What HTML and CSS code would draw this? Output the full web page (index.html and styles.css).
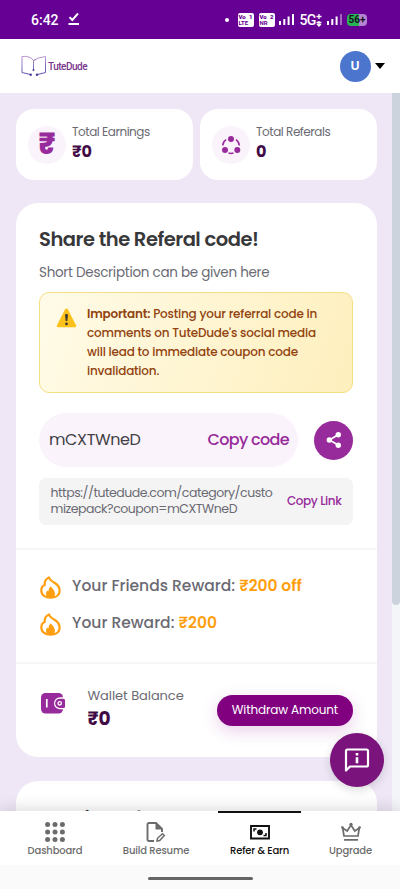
FILE: index.html
```html
<!DOCTYPE html>
<html lang="en">
<head>
<meta charset="utf-8">
<meta name="viewport" content="width=device-width, initial-scale=1">
<title>TuteDude - Refer &amp; Earn</title>
<link rel="stylesheet" href="styles.css">
</head>
<body>
<div class="status">
  <span class="clock">6:42</span>
  <svg class="check" width="12" height="14" viewBox="0 0 12 14" fill="none" stroke="#fff" stroke-width="1.9"><path d="M1.500 5.200 4.300 8 10 1.500M.5 12h10.500"/></svg>
  <span class="dot"></span>
  <span class="volte"><span><b>Vo</b><b>1</b></span><span>LTE</span></span>
  <span class="volte"><span><b>Vo</b><b>2</b></span><span>NR</span></span>
  <svg class="signal" width="16" height="13" viewBox="0 0 16 13" fill="#fff"><path d="M0 8h2v4H0zM4.300 6h2v6h-2zM8.600 3.500h2V12h-2zM13 1h2v11h-2z"/></svg>
  <span class="fiveg">5G</span>
  <svg class="plus" width="6" height="14" viewBox="0 0 6 14" fill="none" stroke="#fff" stroke-width="1.300"><path d="M3 1v5M.5 3.500h5M3 8v5M.5 9.500h5M1 11l2 2 2-2"/></svg>
  <svg class="signal two" width="16" height="13" viewBox="0 0 16 13" fill="#fff"><path d="M0 8h2v4H0zM4.300 6h2v6h-2zM8.600 3.500h2V12h-2z"/><path opacity=".4" d="M13 1h2v11h-2z"/></svg>
  <span class="battery">56<i>+</i></span>
</div>
<header class="top">
  <svg class="book" width="26" height="22" viewBox="0 0 26 22" fill="none" stroke-width=".9">
    <defs><linearGradient id="ink" x1="0" y1="0" x2="0" y2="1"><stop offset="0" stop-color="#b58acb"/><stop offset="1" stop-color="#453fa5"/></linearGradient></defs>
    <path stroke="url(#ink)" d="M9.500 19.500 1 17.500V1.500q8-1 11.500 4Q16 2.500 24.500 1.500v16l-8 2M12.500 5.500V15M12.500 5.500l2.500-1"/>
    <g fill="#493b9b"><circle cx="9.700" cy="19.700" r="1.200"/><circle cx="16" cy="19.700" r="1.200"/><circle cx="12.500" cy="15" r="1"/></g>
  </svg>
  <span class="brand">TuteDude</span>
  <span class="avatar">U</span>
  <span class="caret"></span>
</header>
<div class="viewport">
  <main>
    <section class="stats">
      <article class="stat">
        <span class="bubble rupee">₹</span>
        <div><p>Total Earnings</p><strong>₹0</strong></div>
      </article>
      <article class="stat">
        <span class="bubble"><svg width="20" height="20" viewBox="0 0 20 20" fill="#972b9b"><circle cx="10" cy="4" r="3"/><circle cx="4" cy="15" r="3"/><circle cx="16.300" cy="15" r="3"/><path fill="none" stroke="#972b9b" stroke-width="1.500" d="M1.800 10.500Q2 6.500 5.200 4.700M14.800 4.700Q18 6.500 18.300 10.500M7.500 18q2.500.8 5 0"/></svg></span>
        <div><p class="refs">Total Referals</p><strong>0</strong></div>
      </article>
    </section>
    <section class="card">
      <div class="share">
        <h1>Share the Referal code!</h1>
        <p class="lead">Short Description can be given here</p>
        <div class="notice">
          <svg width="21" height="20" viewBox="0 0 21 20"><path d="M9.200 1.200q1.300-1.400 2.600 0l8.400 16.200q.5 1.700-1.200 1.800H2Q.3 19.100.8 17.400z" fill="#fcc21b"/><path d="M9 6.500q1.500-1.200 3 0l-.7 6.500H9.700z" fill="#3b3530"/><circle cx="10.500" cy="15.900" r="1.400" fill="#3b3530"/></svg>
          <p><b>Important:</b> Posting your referral code in<br>comments on TuteDude's social media<br>will lead to immediate coupon code<br>invalidation.</p>
        </div>
        <div class="coderow">
          <div class="code"><span class="value">mCXTWneD</span><span class="copy">Copy code</span></div>
          <span class="sharebtn"><svg width="16" height="18" viewBox="0 0 16 18" fill="#fff"><path d="M12.500 3.500 3.500 9l9 5.200" fill="none" stroke="#fff" stroke-width="1.700"/><circle cx="12.300" cy="3.800" r="2.700"/><circle cx="3.300" cy="9" r="2.700"/><circle cx="12.300" cy="14.200" r="2.700"/></svg></span>
        </div>
        <div class="link"><p>https://tutedude.com/category/custo<br>mizepack?coupon=mCXTWneD</p><span class="copylink">Copy Link</span></div>
      </div>
      <div class="rewards">
        <div class="reward"><svg width="21" height="23" viewBox="0 0 21 23"><path d="M9 1.400C9.500 4 11.500 5 14.500 6.700c3.500 2 5.100 5 5.100 8 0 4.500-4 7-9.100 7s-9.200-2.700-9.200-7.300c0-2.800 1.400-4.700 3.500-5.400C4.200 5.500 6 3 9 1.400z" fill="none" stroke="#ff9f10" stroke-width="2.200" stroke-linejoin="round"/><path d="M10.500 10.300q4.500 4.200 4.500 7.700 0 3.500-4.500 3.500T6 18q0-2.500 1.300-3.500l1.200 1q0-3 2-5.200z" fill="#ff9f10"/></svg><p class="r1">Your Friends Reward: <b>₹200 off</b></p></div>
        <div class="reward"><svg width="21" height="23" viewBox="0 0 21 23"><path d="M9 1.400C9.500 4 11.500 5 14.500 6.700c3.500 2 5.100 5 5.100 8 0 4.500-4 7-9.100 7s-9.200-2.700-9.200-7.300c0-2.800 1.400-4.700 3.500-5.400C4.200 5.500 6 3 9 1.400z" fill="none" stroke="#ff9f10" stroke-width="2.200" stroke-linejoin="round"/><path d="M10.500 10.300q4.500 4.200 4.500 7.700 0 3.500-4.500 3.500T6 18q0-2.500 1.300-3.500l1.200 1q0-3 2-5.200z" fill="#ff9f10"/></svg><p class="r2">Your Reward: <b>₹200</b></p></div>
      </div>
      <div class="wallet">
        <svg width="24" height="21" viewBox="0 0 24 21"><rect width="22" height="20.500" rx="4.500" fill="#972b9b"/><path d="M5.800 6v8.500" stroke="#fff" stroke-width="1.700"/><path d="M24 4.300h-5a6 6 0 0 0 0 12h5z" fill="#fff"/><path d="M18.800 5.700h3.700q1.500 0 1.500 1.500v6.200q0 1.500-1.500 1.500h-3.700a4.600 4.600 0 0 1 0-9.200z" fill="#972b9b"/><circle cx="18.700" cy="10.300" r="1.700" fill="none" stroke="#fff" stroke-width="1.300"/></svg>
        <div class="balance"><p>Wallet Balance</p><strong>₹0</strong></div>
        <span class="withdraw">Withdraw Amount</span>
      </div>
    </section>
    <section class="card next"><h2>How it works?</h2></section>
  </main>
  <div class="track"><div class="thumb"></div></div>
</div>
<nav>
  <span class="tab"><svg width="20" height="20" viewBox="0 0 20 20" fill="#6c6c6c"><circle cx="2.600" cy="2.600" r="2.500"/><circle cx="10" cy="2.600" r="2.500"/><circle cx="17.400" cy="2.600" r="2.500"/><circle cx="2.600" cy="10" r="2.500"/><circle cx="10" cy="10" r="2.500"/><circle cx="17.400" cy="10" r="2.500"/><circle cx="2.600" cy="17.400" r="2.500"/><circle cx="10" cy="17.400" r="2.500"/><circle cx="17.400" cy="17.400" r="2.500"/></svg><span>Dashboard</span></span>
  <span class="tab"><svg width="20" height="20" viewBox="0 0 20 20" fill="none" stroke="#6c6c6c" stroke-width="1.900"><path d="M8 19H3Q1.500 19 1.500 17.500v-15Q1.500 1 3 1h7l6 6v3"/><path d="M9.500 0v7.500H16.500z" fill="#6c6c6c" stroke="none"/><path d="m11 19 .5-2.700 5-4.500 1.800 1.800-4.600 5z" stroke-width="1.500"/></svg><span>Build Resume</span></span>
  <span class="tab active"><svg width="20" height="20" viewBox="0 0 20 20" fill="none" stroke="#111" stroke-width="1.900"><path d="M1 4h18v12.500H1z"/><circle cx="10" cy="10.300" r="2.900" fill="#111" stroke="none"/><path d="M4 9.500V7h2.500M16 11v2.500h-2.500" stroke-width="1.500"/></svg><span>Refer &amp; Earn</span></span>
  <span class="tab"><svg width="20" height="20" viewBox="0 0 20 20" fill="none" stroke="#6c6c6c" stroke-width="1.700"><path d="M3 14 1.700 6l4.500 3L10 3l3.800 6 4.500-3L17 14zM3 17.800h14"/><g fill="#6c6c6c" stroke="none"><circle cx="10" cy="2.300" r="1.600"/><circle cx="1.500" cy="5.500" r="1.300"/><circle cx="18.500" cy="5.500" r="1.300"/></g></svg><span>Upgrade</span></span>
</nav>
<footer><span></span></footer>
<div class="fab"><svg width="26" height="26" viewBox="0 0 26 26" fill="none" stroke="#fff" stroke-width="2.200" stroke-linejoin="round"><path d="M2 23.500V4Q2 2.500 3.500 2.500h19Q24 2.500 24 4v14q0 1.500-1.500 1.500H6z"/><path d="M13 6v2.500M13 10.200v6" stroke-width="2.600"/></svg></div>
</body>
</html>
```
FILE: styles.css
```css
* { box-sizing: border-box; }
body, p, h1, h2 { margin: 0; }
body {
  width: 400px; height: 889px; overflow: hidden; position: relative;
  display: flex; flex-direction: column;
  font-family: Poppins, Inter, "Noto Sans", sans-serif;
  font-feature-settings: "cv11";
  background: #fff; color: #6a6a73; white-space: nowrap;
}
svg { display: block; flex: none; }
.status { height: 39px; flex: none; background: #660095; color: #fff; display: flex; align-items: center; padding-left: 31px; font-family: Roboto, sans-serif; }
.clock { font-size: 14px; font-weight: 500; width: 37px; }
.check { margin-top: -1px; }
.dot { width: 4px; height: 4px; border-radius: 50%; background: #fff; margin: 0 9px 0 144.500px; }
.volte { width: 16px; height: 14px; margin-right: 5px; padding: 1px 1px 0; border-radius: 2px; background: #fff; color: #660095; font: 700 6px/6px Roboto, sans-serif; display: flex; flex-direction: column; }
.volte span { display: flex; justify-content: space-between; }
.signal { margin-right: 5px; margin-left: -1px; }
.fiveg { font-size: 14px; font-weight: 500; letter-spacing: -.7px; }
.plus { margin: 0 6px 0 0; }
.two { margin-right: 4px; }
.battery { width: 20px; height: 12px; border-radius: 4px; background: linear-gradient(90deg, #28b454 60%, #b785d0 60%); color: #161020; font: 700 10px/12px Roboto, sans-serif; padding-left: 2px; }
.battery i { font-style: normal; }
.top { height: 54px; flex: none; display: flex; align-items: center; padding-left: 21px; background: #fff; }
.brand { font: 500 10px Roboto, sans-serif; letter-spacing: -.5px; color: #79358f; margin-left: 1px; width: 291.500px; }
.avatar { width: 31px; height: 31px; border-radius: 50%; background: #4c75cd; color: #fff; font-size: 13px; font-weight: 600; display: grid; place-items: center; }
.caret { border: 5px solid transparent; border-top: 6px solid #000; border-bottom: 0; margin-left: 4px; }
.viewport { flex: 1; min-height: 0; display: flex; overflow: hidden; background: #efe7f6; }
main { width: 392px; padding: 16px 15px 0 15.500px; }
.stats { display: grid; grid-template-columns: 177.500px 177.500px; gap: 6.500px; height: 71px; }
.stat { background: #fff; border-radius: 18px; display: flex; align-items: center; padding: 0 0 0 12.500px; gap: 6px; }
.stat div { margin-top: -4px; }
.bubble { width: 38px; height: 38px; border-radius: 50%; background: #fbf3fc; display: grid; place-items: center; color: #972b9b; }
.rupee { font-size: 29px; font-weight: 800; line-height: 36px; padding-bottom: 2px; }
.stat p { font-size: 12px; line-height: 18px; letter-spacing: -.46px; }
.stat strong { display: block; font-size: 16px; line-height: 21px; color: #410c45; }
.card { margin-top: 23px; background: #fff; border-radius: 22px; height: 554px; width: 361.500px; }
.share { height: 347px; padding: 24px 24px 0 23.500px; border-bottom: 2px solid #f6f6f7; }
h1 { font-size: 19.500px; line-height: 26px; font-weight: 600; color: #38383a; letter-spacing: -.48px; }
.lead { font-size: 13.500px; line-height: 20px; margin-top: 10px; letter-spacing: -.28px; }
.notice { margin-top: 9px; height: 101px; border: 1px solid #f5df82; border-radius: 10px; background: linear-gradient(110deg, #fffbe8, #feefbd); padding: 11px 16px; display: flex; gap: 10px; color: #92430f; }
.notice svg { margin-top: 4px; }
.notice p { font-size: 12px; line-height: 19px; font-weight: 500; letter-spacing: -.19px; }
.notice b { font-weight: 600; }
.coderow { margin-top: 20px; display: flex; align-items: center; justify-content: space-between; }
.code { width: 259px; height: 54px; border-radius: 27px; background: #fbf3fc; display: flex; align-items: center; justify-content: space-between; padding: 0 9px 2px 10px; font-size: 16px; }
.value { color: #414145; letter-spacing: -.38px; }
.copy, .copylink { color: #972b9b; font-weight: 500; }
.copy { letter-spacing: -.65px; }
.sharebtn { width: 39px; height: 39px; border-radius: 50%; background: #972b9b; display: grid; place-items: center; }
.link { margin-top: 11px; height: 47px; border-radius: 7px; background: #f4f4f4; display: flex; align-items: center; justify-content: space-between; padding: 0 11.500px 2px 11.500px; font-size: 12.500px; line-height: 16px; letter-spacing: -.47px; }
.copylink { font-size: 12px; padding-top: 1px; letter-spacing: -.4px; }
.rewards { height: 114px; border-bottom: 2px solid #f6f6f7; padding: 22px 24px 0; }
.reward { display: flex; align-items: center; gap: 11.500px; height: 37px; margin-top: -5px; font-size: 15.500px; font-weight: 500; letter-spacing: .02px; }
.reward + .reward { margin-top: 0; }
.reward svg { margin-top: 3px; }
.reward b { color: #ff9f10; font-weight: 600; }
.wallet { display: flex; align-items: center; height: 93px; padding: 0 24px 0 25px; }
.wallet > svg { margin-top: -14px; }
.balance { margin-left: 23px; margin-top: -4px; width: 129.500px; }
.balance p { font-size: 13px; line-height: 20px; letter-spacing: -.07px; }
.balance strong { display: block; font-size: 18.500px; line-height: 25px; color: #410c45; }
.withdraw { width: 136.500px; height: 31px; border-radius: 16px; background: #800080; color: #fff; font-size: 12px; line-height: 29px; letter-spacing: -.14px; text-align: center; box-shadow: 0 5px 16px rgba(153, 43, 157, .22); }
.next { margin-top: 24px; height: 200px; padding: 25px 23.500px; }
h2 { font-size: 19px; line-height: 26px; font-weight: 600; color: #38383a; letter-spacing: -.2px; }
.track { width: 8px; background: #f3f5f8; }
.thumb { height: 512px; background: #ccd3dd; border-radius: 0 0 4px 4px; }
nav { height: 54px; flex: none; display: grid; grid-template-columns: 110px 92px 114px 69px; background: #fff; position: relative; box-shadow: 0 0 18px rgba(0, 0, 0, .18); }
.tab { display: flex; flex-direction: column; align-items: center; padding-top: 9px; font-size: 10px; line-height: 18px; font-weight: 500; color: #6c6c6c; border-top: 2px solid transparent; letter-spacing: -.16px; }
.active { color: #111; border-color: #111; margin-left: 16px; margin-right: 15px; }
footer { height: 24px; flex: none; background: #fafafa; display: grid; place-items: center; padding-top: 3px; position: relative; }
footer span { width: 105px; height: 3.500px; border-radius: 2px; background: #656565; }
.fab { position: absolute; left: 330px; top: 733px; width: 54px; height: 54px; border-radius: 50%; background: #7a137c; display: grid; place-items: center; box-shadow: 0 3px 10px rgba(0, 0, 0, .15); }
```
